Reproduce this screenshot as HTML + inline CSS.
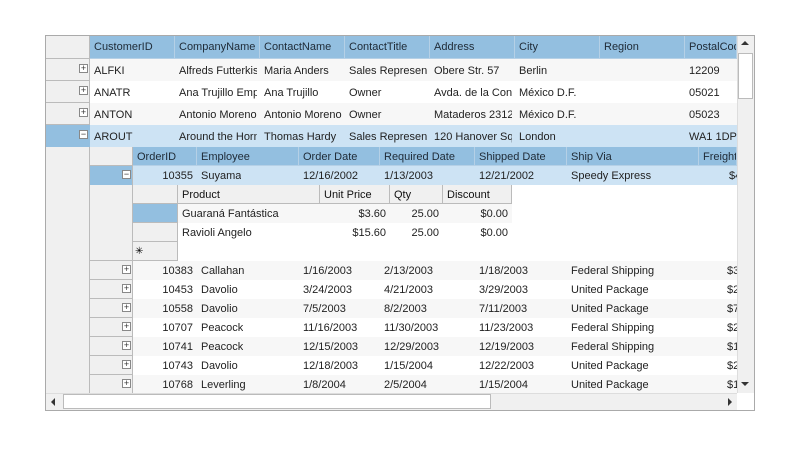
<!DOCTYPE html>
<html><head><meta charset="utf-8"><style>
*{margin:0;padding:0;box-sizing:border-box}
body{width:800px;height:450px;background:#fff;font-family:"Liberation Sans",sans-serif;font-size:11px;color:#222;position:relative;overflow:hidden}
.a{position:absolute;white-space:nowrap;overflow:hidden}
.h{background:#93bfe0;border-right:1px solid #b5d0e6;border-bottom:1px solid #b5d0e6;padding:5px 0 0 4px;color:#1e2a36}
.gh{background:#f0f0f0;border-right:1px solid #bbb;border-bottom:1px solid #bbb}
.r{text-align:right;padding-right:4px}
.pm{position:absolute;width:9px;height:9px;border:1px solid #888;background:#fff;font-size:9px;line-height:7px;text-align:center;color:#333}
</style></head><body>
<div class="a" style="left:45px;top:35px;width:710px;height:376px;border:1px solid #aaa;background:#fff"></div>
<div class="a" style="left:46px;top:36px;width:44px;height:357px;background:#f0f0f0;border-right:1px solid #bbb"></div>
<div class="a gh" style="left:46px;top:36px;width:44px;height:23px"></div>
<div class="a gh" style="left:46px;top:59px;width:44px;height:22px"></div>
<div class="a gh" style="left:46px;top:81px;width:44px;height:22px"></div>
<div class="a gh" style="left:46px;top:103px;width:44px;height:22px"></div>
<div class="a" style="left:46px;top:125px;width:44px;height:22px;background:#93bfe0"></div>
<div class="a h" style="left:90px;top:36px;width:85px;height:23px">CustomerID</div>
<div class="a h" style="left:175px;top:36px;width:85px;height:23px">CompanyName</div>
<div class="a h" style="left:260px;top:36px;width:85px;height:23px">ContactName</div>
<div class="a h" style="left:345px;top:36px;width:85px;height:23px">ContactTitle</div>
<div class="a h" style="left:430px;top:36px;width:85px;height:23px">Address</div>
<div class="a h" style="left:515px;top:36px;width:85px;height:23px">City</div>
<div class="a h" style="left:600px;top:36px;width:85px;height:23px">Region</div>
<div class="a h" style="left:685px;top:36px;width:52px;height:23px">PostalCode</div>
<div class="a" style="left:90px;top:59px;width:647px;height:22px;background:#f7f7f7"></div>
<div class="a" style="left:90px;top:103px;width:647px;height:22px;background:#f7f7f7"></div>
<div class="a" style="left:90px;top:125px;width:647px;height:22px;background:#cde3f4"></div>
<div class="pm" style="left:79px;top:64px">+</div>
<div class="pm" style="left:79px;top:86px">+</div>
<div class="pm" style="left:79px;top:108px">+</div>
<div class="pm" style="left:79px;top:130px">−</div>
<div class="a" style="left:94px;top:65px">ALFKI</div><div class="a" style="left:179px;top:65px;width:78px">Alfreds Futterkiste</div><div class="a" style="left:264px;top:65px;width:78px">Maria Anders</div><div class="a" style="left:349px;top:65px;width:78px">Sales Representative</div><div class="a" style="left:434px;top:65px;width:78px">Obere Str. 57</div><div class="a" style="left:519px;top:65px">Berlin</div><div class="a" style="left:689px;top:65px">12209</div>
<div class="a" style="left:94px;top:87px">ANATR</div><div class="a" style="left:179px;top:87px;width:78px">Ana Trujillo Emparedados</div><div class="a" style="left:264px;top:87px;width:78px">Ana Trujillo</div><div class="a" style="left:349px;top:87px;width:78px">Owner</div><div class="a" style="left:434px;top:87px;width:78px">Avda. de la Constitución</div><div class="a" style="left:519px;top:87px">México D.F.</div><div class="a" style="left:689px;top:87px">05021</div>
<div class="a" style="left:94px;top:109px">ANTON</div><div class="a" style="left:179px;top:109px;width:78px">Antonio Moreno Taquería</div><div class="a" style="left:264px;top:109px;width:78px">Antonio Moreno</div><div class="a" style="left:349px;top:109px;width:78px">Owner</div><div class="a" style="left:434px;top:109px;width:78px">Mataderos  2312</div><div class="a" style="left:519px;top:109px">México D.F.</div><div class="a" style="left:689px;top:109px">05023</div>
<div class="a" style="left:94px;top:131px">AROUT</div><div class="a" style="left:179px;top:131px;width:78px">Around the Horn</div><div class="a" style="left:264px;top:131px;width:78px">Thomas Hardy</div><div class="a" style="left:349px;top:131px;width:78px">Sales Representative</div><div class="a" style="left:434px;top:131px;width:78px">120 Hanover Sq.</div><div class="a" style="left:519px;top:131px">London</div><div class="a" style="left:689px;top:131px;width:48px">WA1 1DP</div>
<div class="a" style="left:90px;top:147px;width:43px;height:246px;background:#f0f0f0;border-right:1px solid #bbb"></div>
<div class="a gh" style="left:90px;top:147px;width:43px;height:19px"></div>
<div class="a" style="left:90px;top:166px;width:43px;height:19px;background:#93bfe0;border-right:1px solid #bbb"></div>
<div class="a gh" style="left:90px;top:185px;width:43px;height:76px"></div>
<div class="a h" style="left:133px;top:147px;width:64px;height:19px;padding-top:4px">OrderID</div>
<div class="a h" style="left:197px;top:147px;width:102px;height:19px;padding-top:4px">Employee</div>
<div class="a h" style="left:299px;top:147px;width:81px;height:19px;padding-top:4px">Order Date</div>
<div class="a h" style="left:380px;top:147px;width:95px;height:19px;padding-top:4px">Required Date</div>
<div class="a h" style="left:475px;top:147px;width:92px;height:19px;padding-top:4px">Shipped Date</div>
<div class="a h" style="left:567px;top:147px;width:132px;height:19px;padding-top:4px">Ship Via</div>
<div class="a h" style="left:699px;top:147px;width:38px;height:19px;padding-top:4px">Freight</div>
<div class="a" style="left:133px;top:166px;width:604px;height:19px;background:#cde3f4"></div>
<div class="pm" style="left:122px;top:170px">−</div>
<div class="a r" style="left:133px;top:170px;width:64px">10355</div><div class="a" style="left:201px;top:170px">Suyama</div><div class="a" style="left:303px;top:170px">12/16/2002</div><div class="a" style="left:384px;top:170px">1/13/2003</div><div class="a" style="left:479px;top:170px">12/21/2002</div><div class="a" style="left:571px;top:170px">Speedy Express</div><div class="a" style="left:729px;top:170px;width:8px">$41.95</div>
<div class="a gh" style="left:133px;top:185px;width:45px;height:19px"></div>
<div class="a" style="left:133px;top:204px;width:45px;height:19px;background:#93bfe0;border-right:1px solid #bbb;border-bottom:1px solid #bbb"></div>
<div class="a gh" style="left:133px;top:223px;width:45px;height:19px"></div>
<div class="a gh" style="left:133px;top:242px;width:45px;height:19px;font-size:10px;line-height:19px;padding-left:2px;color:#000">✳</div>
<div class="a gh" style="left:178px;top:185px;width:142px;height:19px;padding:4px 0 0 4px;color:#111">Product</div>
<div class="a gh" style="left:320px;top:185px;width:70px;height:19px;padding:4px 0 0 4px;color:#111">Unit Price</div>
<div class="a gh" style="left:390px;top:185px;width:53px;height:19px;padding:4px 0 0 4px;color:#111">Qty</div>
<div class="a gh" style="left:443px;top:185px;width:69px;height:19px;padding:4px 0 0 4px;color:#111">Discount</div>
<div class="a" style="left:178px;top:204px;width:334px;height:19px;background:#f7f7f7"></div>
<div class="a" style="left:182px;top:208px">Guaraná Fantástica</div><div class="a r" style="left:320px;top:208px;width:70px">$3.60</div><div class="a r" style="left:390px;top:208px;width:53px">25.00</div><div class="a r" style="left:443px;top:208px;width:69px">$0.00</div>
<div class="a" style="left:182px;top:227px">Ravioli Angelo</div><div class="a r" style="left:320px;top:227px;width:70px">$15.60</div><div class="a r" style="left:390px;top:227px;width:53px">25.00</div><div class="a r" style="left:443px;top:227px;width:69px">$0.00</div>
<div class="a" style="left:133px;top:261px;width:604px;height:19px;background:#f7f7f7"></div>
<div class="a" style="left:133px;top:299px;width:604px;height:19px;background:#f7f7f7"></div>
<div class="a" style="left:133px;top:337px;width:604px;height:19px;background:#f7f7f7"></div>
<div class="a" style="left:133px;top:375px;width:604px;height:18px;background:#f7f7f7"></div>
<div id="rows"></div>
<script>
var d=[["10383","Callahan","1/16/2003","2/13/2003","1/18/2003","Federal Shipping","$34.24"],
["10453","Davolio","3/24/2003","4/21/2003","3/29/2003","United Package","$25.36"],
["10558","Davolio","7/5/2003","8/2/2003","7/11/2003","United Package","$72.97"],
["10707","Peacock","11/16/2003","11/30/2003","11/23/2003","Federal Shipping","$21.74"],
["10741","Peacock","12/15/2003","12/29/2003","12/19/2003","Federal Shipping","$10.96"],
["10743","Davolio","12/18/2003","1/15/2004","12/22/2003","United Package","$23.72"],
["10768","Leverling","1/8/2004","2/5/2004","1/15/2004","United Package","$146.32"]];
var h="";var xs=[201,303,384,479,571];
d.forEach(function(r,i){var t=261+i*19;
h+='<div class="a gh" style="left:90px;top:'+t+'px;width:43px;height:19px"></div>';
h+='<div class="pm" style="left:122px;top:'+(t+4)+'px">+</div>';
h+='<div class="a r" style="left:133px;top:'+(t+4)+'px;width:64px">'+r[0]+'</div>';
for(var k=0;k<5;k++)h+='<div class="a" style="left:'+xs[k]+'px;top:'+(t+4)+'px">'+r[k+1]+'</div>';
h+='<div class="a" style="left:727px;top:'+(t+4)+'px;width:10px">'+r[6]+'</div>';});
document.getElementById("rows").innerHTML=h;
</script>
<div class="a" style="left:737px;top:36px;width:17px;height:357px;background:#f0f0f0;border-left:1px solid #ddd"></div>
<div class="a" style="left:741px;top:41px;width:0;height:0;border-left:4px solid transparent;border-right:4px solid transparent;border-bottom:4px solid #333"></div>
<div class="a" style="left:738px;top:53px;width:15px;height:46px;background:#fff;border:1px solid #bbb"></div>
<div class="a" style="left:741px;top:382px;width:0;height:0;border-left:4px solid transparent;border-right:4px solid transparent;border-top:4px solid #333"></div>
<div class="a" style="left:46px;top:393px;width:708px;height:17px;background:#f0f0f0;border-top:1px solid #ddd"></div>
<div class="a" style="left:51px;top:398px;width:0;height:0;border-top:4px solid transparent;border-bottom:4px solid transparent;border-right:4px solid #333"></div>
<div class="a" style="left:63px;top:394px;width:428px;height:15px;background:#fff;border:1px solid #bbb"></div>
<div class="a" style="left:728px;top:398px;width:0;height:0;border-top:4px solid transparent;border-bottom:4px solid transparent;border-left:4px solid #333"></div>
<div class="a" style="left:737px;top:393px;width:17px;height:17px;background:#fff"></div>
</body></html>
